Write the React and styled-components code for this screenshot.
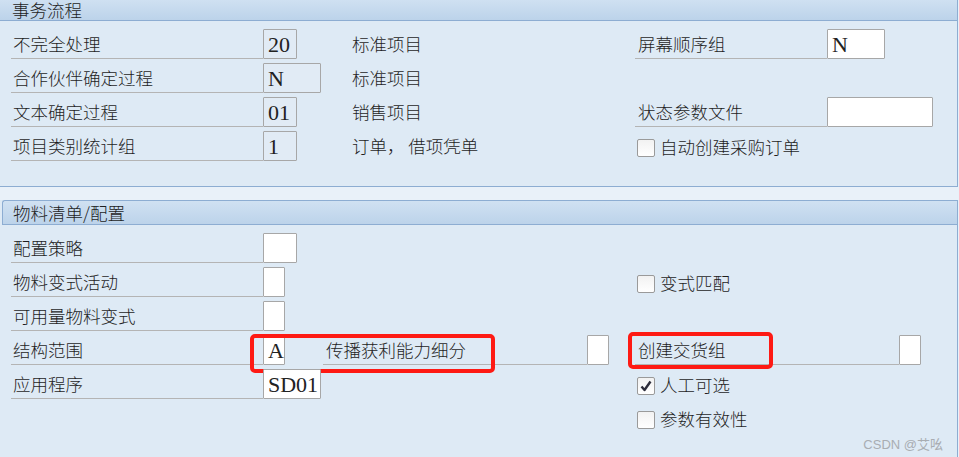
import React from 'react'
import styled, { createGlobalStyle } from 'styled-components'

const GlobalStyle = createGlobalStyle`
  body {
    margin: 0;
    background: #e9f1f9;
    font-family: "Noto Sans CJK SC", "Noto Sans", sans-serif;
    color: #1e1e1e;
  }
`

function CheckMark() {
  return (
    <svg width="14" height="14" viewBox="0 0 14 14">
      <path d="M2.5 7.5 L5.5 11 L11.5 2.5" fill="none" stroke="#2c2c3a" strokeWidth="2.4" strokeLinejoin="round" />
    </svg>
  )
}

function Check({ checked, children }) {
  return (
    <CheckRow>
      <CheckBox>{checked && <CheckMark />}</CheckBox>
      <CheckLabel>{children}</CheckLabel>
    </CheckRow>
  )
}

function App() {
  return (
    <Page>
      <GlobalStyle />
      <Panel $first>
        <PanelHeader $h={21}>事务流程</PanelHeader>
        <PanelBody $bottom={25}>
          <Row>
            <LeftPart>
              <Label $w={252}>不完全处理</Label>
              <Slot $w={89}><Field $w={34}>20</Field></Slot>
              <Desc>标准项目</Desc>
            </LeftPart>
            <RightPart>
              <Label $w={192} $pad={3}>屏幕顺序组</Label>
              <Field $w={58} $edit>N</Field>
            </RightPart>
          </Row>
          <Row>
            <LeftPart>
              <Label $w={252}>合作伙伴确定过程</Label>
              <Slot $w={89}><Field $w={58}>N</Field></Slot>
              <Desc>标准项目</Desc>
            </LeftPart>
            <RightPart />
          </Row>
          <Row>
            <LeftPart>
              <Label $w={252}>文本确定过程</Label>
              <Slot $w={89}><Field $w={34}>01</Field></Slot>
              <Desc>销售项目</Desc>
            </LeftPart>
            <RightPart>
              <Label $w={192} $pad={3}>状态参数文件</Label>
              <Field $w={106} $edit />
            </RightPart>
          </Row>
          <Row>
            <LeftPart>
              <Label $w={252}>项目类别统计组</Label>
              <Slot $w={89}><Field $w={34}>1</Field></Slot>
              <Desc>订单， 借项凭单</Desc>
            </LeftPart>
            <RightPart>
              <Check>自动创建采购订单</Check>
            </RightPart>
          </Row>
        </PanelBody>
      </Panel>

      <Panel>
        <PanelHeader $boxed>物料清单/配置</PanelHeader>
        <PanelBody $bottom={30}>
          <Row>
            <LeftPart>
              <Label $w={252}>配置策略</Label>
              <Field $w={34} $edit />
            </LeftPart>
            <RightPart />
          </Row>
          <Row>
            <LeftPart>
              <Label $w={252}>物料变式活动</Label>
              <Field $w={22} $edit />
            </LeftPart>
            <RightPart>
              <Check>变式匹配</Check>
            </RightPart>
          </Row>
          <Row>
            <LeftPart>
              <Label $w={252}>可用量物料变式</Label>
              <Field $w={22} $edit />
            </LeftPart>
            <RightPart />
          </Row>
          <Row>
            <LeftPart>
              <Label $w={252}>结构范围</Label>
              <Slot $w={60}><Field $w={22} $edit>A</Field></Slot>
              <Label $w={264} $pad={3}>传播获利能力细分</Label>
              <Field $w={22} $edit />
            </LeftPart>
            <RightPart>
              <Label $w={264} $pad={3}>创建交货组</Label>
              <Field $w={22} $edit />
            </RightPart>
            <Highlight $left={239} $top={3} $w={245} $h={39} />
            <Highlight $left={617} $top={1} $w={145} $h={37} />
          </Row>
          <Row>
            <LeftPart>
              <Label $w={252}>应用程序</Label>
              <Field $w={58} $edit>SD01</Field>
            </LeftPart>
            <RightPart>
              <Check checked>人工可选</Check>
            </RightPart>
          </Row>
          <Row>
            <LeftPart />
            <RightPart>
              <Check>参数有效性</Check>
            </RightPart>
          </Row>
        </PanelBody>
        <Watermark>CSDN @艾吆</Watermark>
      </Panel>
    </Page>
  )
}

const Page = styled.div`
  width: 959px;
  height: 457px;
  overflow: hidden;
`

const Panel = styled.section`
  position: relative;
  width: 958px;
  box-sizing: border-box;
  margin-top: ${(p) => (p.$first ? '-2px' : '13px')};
  background: #deeaf5;
  border-right: 1px solid #8dadd2;
  border-bottom: 1px solid #8dadd2;
`

const PanelHeader = styled.div`
  height: ${(p) => p.$h ?? 23}px;
  line-height: ${(p) => p.$h ?? 23}px;
  padding-left: 12px;
  font-size: 17.5px;
  font-weight: 300;
  background: linear-gradient(#d0e1f2, #bcd3ea);
  border-top: 1px solid #8dadd2;
  border-bottom: 1px solid #8dadd2;
  ${(p) =>
    p.$boxed &&
    `
    margin-left: 2px;
    padding-left: 10px;
    border-left: 1px solid #8dadd2;
    border-top-left-radius: 3px;
  `}
`

const PanelBody = styled.div`
  padding: 4px 0 ${(p) => p.$bottom}px 11px;
`

const Row = styled.div`
  position: relative;
  display: flex;
  align-items: flex-end;
  height: 34px;
`

const LeftPart = styled.div`
  display: flex;
  align-items: flex-end;
  width: 624px;
  height: 30px;
  flex-shrink: 0;
`

const RightPart = styled.div`
  display: flex;
  align-items: flex-end;
  height: 30px;
  flex: 1;
`

const Label = styled.div`
  box-sizing: border-box;
  width: ${(p) => p.$w}px;
  height: 30px;
  line-height: 30px;
  padding-left: ${(p) => p.$pad ?? 2}px;
  font-size: 17.5px;
  font-weight: 300;
  white-space: nowrap;
  border-bottom: 1px solid #b4b4b4;
`

const Slot = styled.div`
  width: ${(p) => p.$w}px;
  display: flex;
`

const Field = styled.div`
  box-sizing: border-box;
  width: ${(p) => p.$w}px;
  height: 30px;
  padding-left: 4px;
  line-height: 29px;
  font-family: "Liberation Serif", "Times New Roman", serif;
  font-size: 22px;
  color: #222;
  background: ${(p) => (p.$edit ? '#ffffff' : '#e1ebf5')};
  border: 1px solid #a7a7a7;
  border-radius: 1px;
`

const Desc = styled.div`
  height: 30px;
  line-height: 30px;
  font-size: 17.5px;
  font-weight: 300;
  white-space: nowrap;
`

const CheckRow = styled.div`
  display: flex;
  align-items: center;
  height: 30px;
  padding-left: 2px;
`

const CheckBox = styled.div`
  box-sizing: border-box;
  width: 18px;
  height: 18px;
  display: flex;
  align-items: center;
  justify-content: center;
  background: linear-gradient(#f2f2f2, #ffffff);
  border: 1px solid #9a9a9a;
  border-radius: 2px;
  margin-top: 3px;
`

const CheckLabel = styled.span`
  margin-left: 5px;
  font-size: 17.5px;
  font-weight: 300;
  white-space: nowrap;
`

const Highlight = styled.div`
  position: absolute;
  left: ${(p) => p.$left}px;
  top: ${(p) => p.$top}px;
  width: ${(p) => p.$w}px;
  height: ${(p) => p.$h}px;
  box-sizing: border-box;
  border: 4px solid #fe1a14;
  border-radius: 5px;
  pointer-events: none;
`

const Watermark = styled.div`
  position: absolute;
  right: 14px;
  bottom: 10px;
  font-family: "Liberation Sans", "Noto Sans CJK SC", sans-serif;
  font-size: 13px;
  color: #a9adb2;
`

export default App
